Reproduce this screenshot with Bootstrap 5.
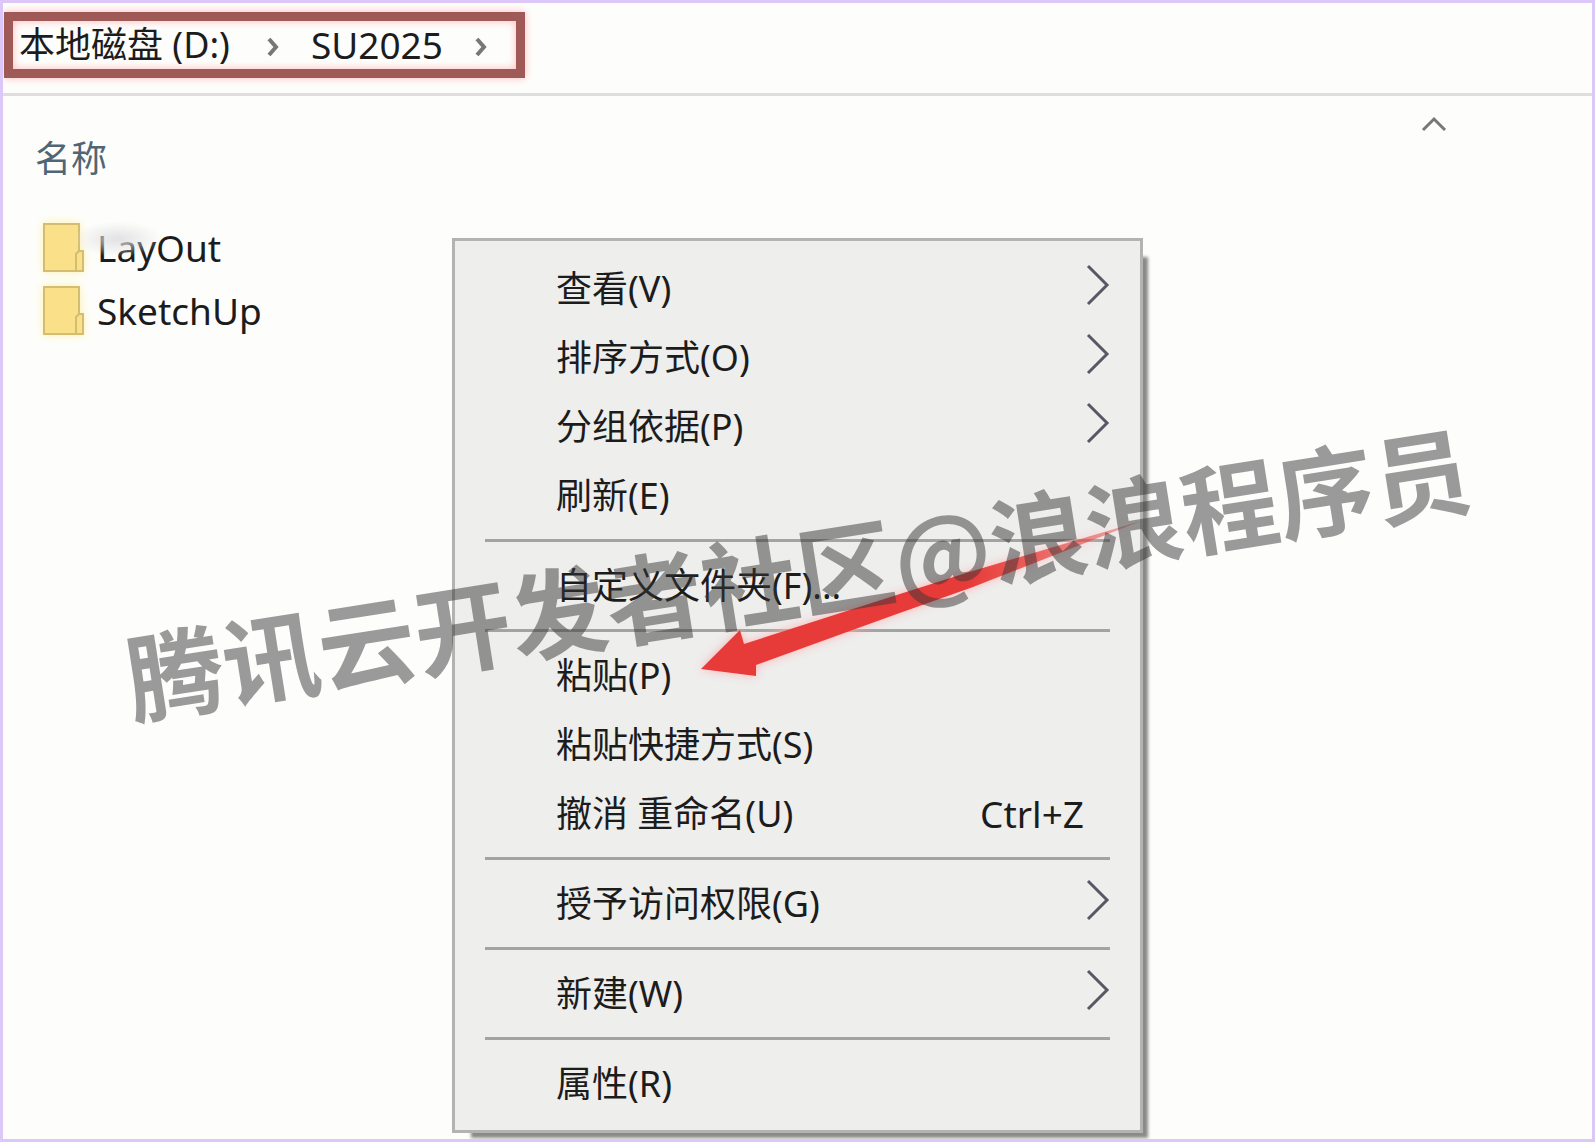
<!DOCTYPE html>
<html lang="zh-CN">
<head>
<meta charset="utf-8">
<meta name="viewport" content="width=device-width, initial-scale=1">
<title>SU2025</title>
<link href="https://cdn.jsdelivr.net/npm/bootstrap@5.3.0/dist/css/bootstrap.min.css" rel="stylesheet">
<style>
  body {
    font-family: "Noto Sans", "Noto Sans CJK SC", sans-serif;
    font-size: 36px;
    line-height: 48px;
    color: #1c1c1c;
    background: #fdfefc;
  }
  .explorer { border: 3px solid #dcc8f8; }
  .address { padding: 9px 1px 15px; border-bottom: 3px solid #dedede; }
  .path-box {
    border: 9px solid #9f5a58;
    padding: 0 22px 0 6px;
    box-shadow: 0 0 8px #ffb9b9, inset 0 0 8px #ffb9b9;
  }
  .path-box a { color: inherit; }
  .path-box svg { margin: 2px 25px 0 30px; }
  .path-box svg:last-child { margin: 2px 0 0 25px; }
  .latin { font-size: 37px; }
  .col-head { color: #506675; padding: 39px 32px 0; }
  .sort-mark { margin: -21px 112px 0 0; }
  .files { padding: 33px 40px 0; }
  .file-row { height: 63px; gap: 12px; color: inherit; }
  .folder { filter: drop-shadow(0 0 5px #fff0a8); }
  .ctx {
    --bs-dropdown-font-size: 36px;
    top: 235px;
    left: 449px;
    width: 691px;
    padding: 13px 30px 12px;
    background: #eeeeed;
    border: 3px solid #b3b3b1;
    border-radius: 0;
    box-shadow: 12px 12px 3px -7px #8a8b88;
  }
  .ctx .dropdown-item {
    height: 69px;
    padding: 0 0 0 71px;
    color: #1c1c1c;
    line-height: 48px;
  }
  .ctx .dropdown-divider { margin: 9px 0; border-top: 3px solid #a3a4a1; opacity: 1; }
  .ctx .keys { margin-right: 26px; }
  .ctx svg { margin-bottom: 8px; }
  .pointer { left: 681px; top: 499px; filter: drop-shadow(0 0 5px #ffb0b0); z-index: 1010; }
  .stain {
    left: 70px; top: 218px; width: 90px; height: 36px;
    background: radial-gradient(closest-side, rgba(226, 224, 226, .95), rgba(245, 245, 245, 0));
  }
  .stamp {
    z-index: 1020;
    font-family: "Noto Sans CJK SC", sans-serif;
    font-size: 97px;
    font-weight: 700;
    line-height: 1;
    color: rgba(53, 53, 53, .5);
    transform: rotate(-9deg);
  }
</style>
<script src="https://cdn.jsdelivr.net/npm/bootstrap@5.3.0/dist/js/bootstrap.bundle.min.js"></script>
</head>
<body>
<div class="explorer position-relative min-vh-100 overflow-hidden">
  <header class="address d-flex">
    <nav class="path-box d-flex align-items-center" aria-label="路径">
      <a href="#" class="text-decoration-none">本地磁盘 (D:)</a>
      <svg width="26" height="26" viewBox="0 0 26 26" fill="none" stroke="#777" stroke-width="4" aria-hidden="true"><path d="M9 6l7 8-7 8"/></svg>
      <a href="#" class="latin text-decoration-none">SU2025</a>
      <svg width="26" height="26" viewBox="0 0 26 26" fill="none" stroke="#777" stroke-width="4" aria-hidden="true"><path d="M9 6l7 8-7 8"/></svg>
    </nav>
  </header>

  <main>
    <div class="col-head d-flex justify-content-between align-items-start">
      <span>名称</span>
      <svg class="sort-mark" width="28" height="20" viewBox="0 0 28 20" fill="none" stroke="#777" stroke-width="3" aria-hidden="true"><path d="M3 16L14 5l11 11"/></svg>
    </div>
    <div class="files d-flex flex-column align-items-start">
      <a href="#" class="file-row d-flex align-items-center text-decoration-none">
        <svg class="folder" width="42" height="50" viewBox="0 0 42 50" aria-hidden="true"><path d="M1 1h35v27h4v20H1z" fill="#fbe08a" stroke="#d3bd72" stroke-width="2"/><path d="M33 48V31l3-3" fill="none" stroke="#d3bd72" stroke-width="2"/></svg>
        <span class="latin">LayOut</span>
      </a>
      <a href="#" class="file-row d-flex align-items-center text-decoration-none">
        <svg class="folder" width="42" height="50" viewBox="0 0 42 50" aria-hidden="true"><path d="M1 1h35v27h4v20H1z" fill="#fbe08a" stroke="#d3bd72" stroke-width="2"/><path d="M33 48V31l3-3" fill="none" stroke="#d3bd72" stroke-width="2"/></svg>
        <span class="latin">SketchUp</span>
      </a>
    </div>
  </main>
  <div class="stain position-absolute pe-none"></div>

  <div class="ctx dropdown-menu show">
    <button type="button" class="dropdown-item d-flex align-items-center justify-content-between"><span>查看(V)</span><svg width="24" height="42" viewBox="0 0 24 42" fill="none" stroke="#5b5664" stroke-width="3" aria-hidden="true"><path d="M2 2l19 19L2 40"/></svg></button>
    <button type="button" class="dropdown-item d-flex align-items-center justify-content-between"><span>排序方式(O)</span><svg width="24" height="42" viewBox="0 0 24 42" fill="none" stroke="#5b5664" stroke-width="3" aria-hidden="true"><path d="M2 2l19 19L2 40"/></svg></button>
    <button type="button" class="dropdown-item d-flex align-items-center justify-content-between"><span>分组依据(P)</span><svg width="24" height="42" viewBox="0 0 24 42" fill="none" stroke="#5b5664" stroke-width="3" aria-hidden="true"><path d="M2 2l19 19L2 40"/></svg></button>
    <button type="button" class="dropdown-item d-flex align-items-center">刷新(E)</button>
    <hr class="dropdown-divider">
    <button type="button" class="dropdown-item d-flex align-items-center">自定义文件夹(F)...</button>
    <hr class="dropdown-divider">
    <button type="button" class="dropdown-item d-flex align-items-center">粘贴(P)</button>
    <button type="button" class="dropdown-item d-flex align-items-center">粘贴快捷方式(S)</button>
    <button type="button" class="dropdown-item d-flex align-items-center justify-content-between"><span>撤消 重命名(U)</span><span class="keys latin">Ctrl+Z</span></button>
    <hr class="dropdown-divider">
    <button type="button" class="dropdown-item d-flex align-items-center justify-content-between"><span>授予访问权限(G)</span><svg width="24" height="42" viewBox="0 0 24 42" fill="none" stroke="#5b5664" stroke-width="3" aria-hidden="true"><path d="M2 2l19 19L2 40"/></svg></button>
    <hr class="dropdown-divider">
    <button type="button" class="dropdown-item d-flex align-items-center justify-content-between"><span>新建(W)</span><svg width="24" height="42" viewBox="0 0 24 42" fill="none" stroke="#5b5664" stroke-width="3" aria-hidden="true"><path d="M2 2l19 19L2 40"/></svg></button>
    <hr class="dropdown-divider">
    <button type="button" class="dropdown-item d-flex align-items-center">属性(R)</button>
  </div>

  <svg class="pointer position-absolute pe-none" width="480" height="190" viewBox="0 0 480 190" aria-hidden="true">
    <defs><linearGradient id="fade" x1="0" x2="1"><stop offset=".6" stop-color="#e63b38"/><stop offset="1" stop-color="#e63b38" stop-opacity=".35"/></linearGradient></defs>
    <path d="M17 167L56 128l4 14L197 98l85-27L457 19 289 85l-79 28L72 163v11z" fill="url(#fade)"/>
  </svg>
  <div class="position-absolute top-0 start-0 w-100 h-100 pb-1 d-flex align-items-center justify-content-center pe-none">
    <div class="stamp text-nowrap">腾讯云开发者社区@浪浪程序员</div>
  </div>
</div>
</body>
</html>
